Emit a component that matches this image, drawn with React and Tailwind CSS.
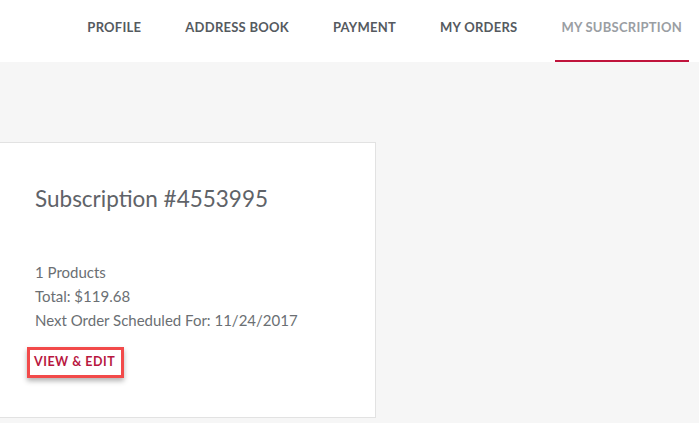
const tabs = ['Profile', 'Address Book', 'Payment', 'My Orders', 'My Subscription'];

function NavBar({ active }) {
  return (
    <div className="h-[62px] bg-white flex items-start justify-end gap-[44px] pr-[17px]">
      {tabs.map((tab) => (
        <a
          key={tab}
          className={`relative h-[60px] flex items-center pb-[4px] text-[13px] font-bold uppercase tracking-[0.25px] ${
            tab === active ? 'text-[#9a9ea3]' : 'text-[#555a5f]'
          }`}
        >
          {tab}
          {tab === active && (
            <span className="absolute -left-[6px] -right-[7px] -bottom-[2px] h-[2px] bg-[#c0143c]" />
          )}
        </a>
      ))}
    </div>
  );
}

function SubscriptionCard({ sub }) {
  return (
    <div className="w-[376px] bg-white border border-l-0 border-[#e2e2e2] pl-[35px] pt-[40px] pb-[39px]">
      <h2 className="text-[22.5px] leading-[32px] text-[#5f6368]">Subscription #{sub.id}</h2>
      <div className="mt-[45px] text-[15px] leading-[24px] text-[#6b6f73]">
        <p>{sub.products} Products</p>
        <p>Total: ${sub.total}</p>
        <p>Next Order Scheduled For: {sub.nextOrder}</p>
      </div>
      <a className="mt-[15px] -ml-[8px] inline-flex items-center h-[31px] pl-[4px] pr-[6px] border-[3px] border-[#f24a4a] shadow-[0_3px_5px_rgba(0,0,0,0.3)] text-[12.5px] font-bold uppercase tracking-[0.5px] text-[#b8173f]">
        View &amp; Edit
      </a>
    </div>
  );
}

export default function App() {
  const sub = { id: '4553995', products: 1, total: '119.68', nextOrder: '11/24/2017' };
  return (
    <div className="w-[699px] h-[423px] overflow-hidden bg-[#f6f6f6] font-['Lato',sans-serif]">
      <NavBar active="My Subscription" />
      <div className="pt-[80px]">
        <SubscriptionCard sub={sub} />
      </div>
    </div>
  );
}
